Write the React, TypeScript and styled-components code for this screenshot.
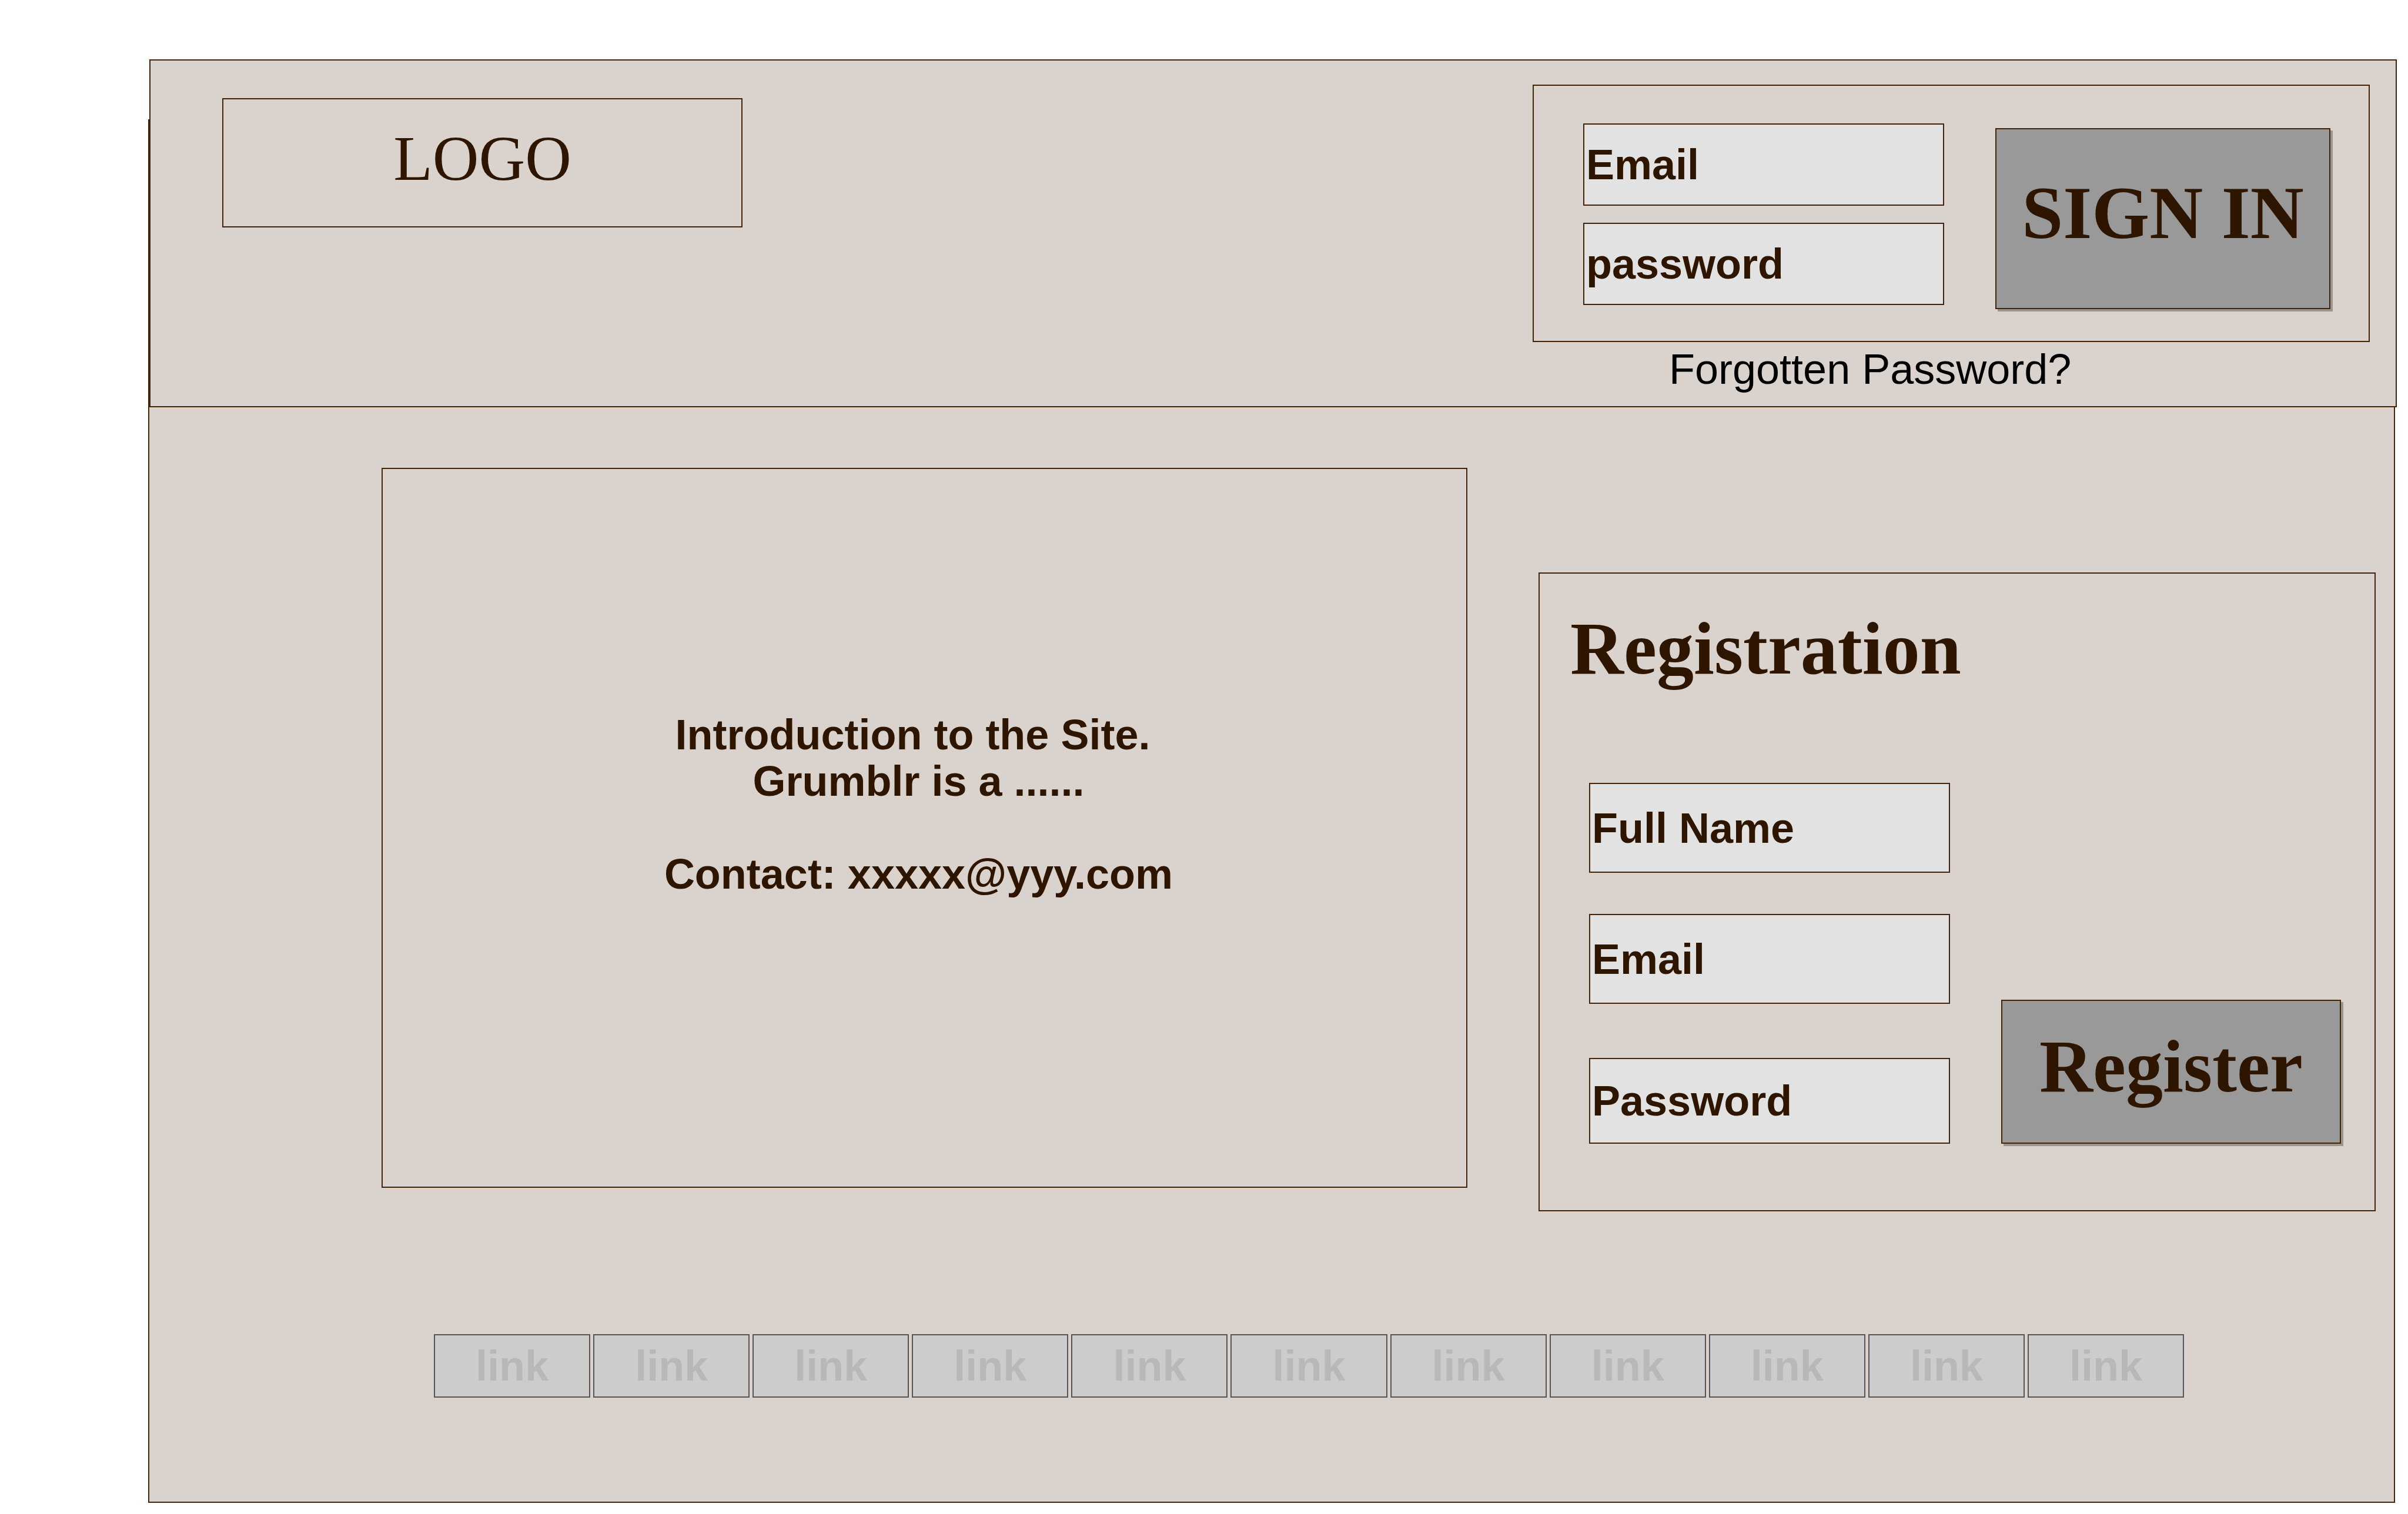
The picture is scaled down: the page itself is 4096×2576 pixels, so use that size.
import React from 'react';
import styled, { createGlobalStyle } from 'styled-components';

const ink = '#2e1500';
const line = '#432409';
const paper = '#dad2cc';
const sans = '"Liberation Sans", Arial, sans-serif';
const serif = '"Liberation Serif", "Times New Roman", serif';

const GlobalStyle = createGlobalStyle`
  *, *::before, *::after { box-sizing: border-box; }
  body { margin: 0; background: #fff; color: ${ink}; font-family: ${sans}; }
  h1, p { margin: 0; }
`;

const Page = styled.div`
  padding: 101px 19px 19px 252px;
`;

const Header = styled.header`
  position: relative;
  z-index: 1;
  display: flex;
  justify-content: space-between;
  align-items: flex-start;
  min-height: 592px;
  margin-left: 2px;
  padding: 41px 44px 0 122px;
  background: ${paper};
  border: 2px solid ${line};
`;

const Logo = styled.div`
  display: flex;
  align-items: center;
  justify-content: center;
  width: 885px;
  height: 220px;
  margin-top: 23px;
  padding-bottom: 14px;
  border: 2px solid ${line};
  font: 109px/126px ${serif};
`;

const Account = styled.div`
  display: flex;
  flex-direction: column;
  align-items: flex-start;
  width: 1424px;
`;

const SignInForm = styled.form`
  display: flex;
  align-items: flex-start;
  gap: 87px;
  width: 100%;
  height: 438px;
  padding: 64px 0 0 84px;
  border: 2px solid ${line};
`;

const Fields = styled.div<{ $gap: number }>`
  display: flex;
  flex-direction: column;
  gap: ${(p) => p.$gap}px;
`;

const Field = styled.input<{ $height: number; $spaced?: boolean }>`
  width: 614px;
  height: ${(p) => p.$height}px;
  margin: ${(p) => (p.$spaced ? '22px 0 0' : '0')};
  padding: 0 3px;
  background: #e2e2e2;
  border: 2px solid ${line};
  border-radius: 0;
  color: ${ink};
  font: bold 72px/80px ${sans};

  &::placeholder {
    color: ${ink};
    opacity: 1;
  }
`;

const Button = styled.button<{ $width: number; $height: number }>`
  width: ${(p) => p.$width}px;
  height: ${(p) => p.$height}px;
  padding: 0 0 18px;
  background: #999;
  border: 2px solid ${line};
  border-radius: 0;
  box-shadow: 4px 4px 0 #9b948f;
  color: ${ink};
  font: bold 126px/144px ${serif};
  white-space: nowrap;
`;

const SignInAction = styled.div`
  padding-top: 8px;
`;

const ForgottenLink = styled.a`
  margin: 6px 0 0 232px;
  color: #000;
  font: 72px/80px ${sans};
  text-decoration: none;
`;

const Main = styled.main`
  margin: -490px 3px 0 0;
  padding: 593px 0 177px;
  background: ${paper};
  border: solid ${line};
  border-width: 0 2px 2px;
`;

const Columns = styled.div`
  display: flex;
  align-items: flex-start;
  gap: 121px;
  padding: 0 31px 0 395px;
`;

const Intro = styled.section`
  flex: 1;
  display: flex;
  align-items: center;
  justify-content: center;
  height: 1225px;
  padding-right: 20px;
  border: 2px solid ${line};
`;

const IntroText = styled.p`
  font: bold 72px/79px ${sans};
  text-align: center;
  white-space: pre;
`;

const Registration = styled.form`
  width: 1424px;
  margin-top: 178px;
  padding: 56px 0 113px 52px;
  border: 2px solid ${line};
`;

const Title = styled.h1`
  font: bold 126px/144px ${serif};
`;

const RegistrationRow = styled.div`
  display: flex;
  align-items: flex-end;
  gap: 87px;
  padding: 156px 0 0 32px;
`;

const Links = styled.nav`
  display: flex;
  gap: 5px;
  padding: 209px 357px 0 484px;
`;

const FooterLink = styled.a`
  flex: 1;
  background: #ccc;
  border: 2px solid #555;
  color: #b8b8b8;
  font: bold 72px/104px ${sans};
  text-align: center;
  text-decoration: none;
`;

const links = Array.from({ length: 11 }, (_, i) => i);

export default function App() {
  return (
    <Page>
      <GlobalStyle />
      <Header>
        <Logo>LOGO</Logo>
        <Account>
          <SignInForm onSubmit={(e) => e.preventDefault()}>
            <Fields $gap={29}>
              <Field $height={140} type="email" aria-label="Email" placeholder="Email" />
              <Field $height={140} type="password" aria-label="password" placeholder="password" />
            </Fields>
            <SignInAction>
              <Button $width={570} $height={308} type="submit">SIGN IN</Button>
            </SignInAction>
          </SignInForm>
          <ForgottenLink href="#forgotten">Forgotten Password?</ForgottenLink>
        </Account>
      </Header>
      <Main>
        <Columns>
          <Intro>
            <IntroText>
              {'Introduction to the Site.\u00a0\nGrumblr is a ......\n\nContact: xxxxx@yyy.com\n\u00a0'}
            </IntroText>
          </Intro>
          <Registration onSubmit={(e) => e.preventDefault()}>
            <Title>Registration</Title>
            <RegistrationRow>
              <Fields $gap={70}>
                <Field $height={153} type="text" aria-label="Full Name" placeholder="Full Name" />
                <Field $height={153} type="email" aria-label="Email" placeholder="Email" />
                <Field $height={146} $spaced type="password" aria-label="Password" placeholder="Password" />
              </Fields>
              <Button $width={578} $height={245} type="submit">Register</Button>
            </RegistrationRow>
          </Registration>
        </Columns>
        <Links aria-label="Footer">
          {links.map((i) => (
            <FooterLink key={i} href={`#link-${i + 1}`}>link</FooterLink>
          ))}
        </Links>
      </Main>
    </Page>
  );
}
